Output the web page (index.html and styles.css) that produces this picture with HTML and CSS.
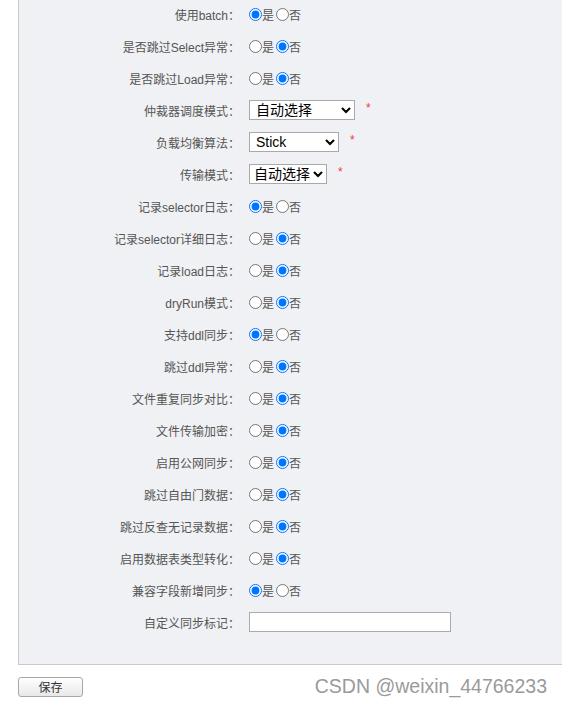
FILE: index.html
```html
<!DOCTYPE html>
<html lang="zh-CN">
<head>
  <meta charset="UTF-8" />
  <title>同步配置</title>
  <link rel="stylesheet" href="styles.css">
</head>
<body>
  <form class="panel">
    <div class="row"><label class="lbl">使用batch：</label><div class="ctl"><input type="radio" name="batch" checked>是<input type="radio" name="batch">否</div></div>
    <div class="row"><label class="lbl">是否跳过Select异常：</label><div class="ctl"><input type="radio" name="skipSel">是<input type="radio" name="skipSel" checked>否</div></div>
    <div class="row"><label class="lbl">是否跳过Load异常：</label><div class="ctl"><input type="radio" name="skipLoad">是<input type="radio" name="skipLoad" checked>否</div></div>
    <div class="row"><label class="lbl">仲裁器调度模式：</label><div class="ctl"><select class="sel-arb"><option>自动选择</option></select><span class="req">*</span></div></div>
    <div class="row"><label class="lbl">负载均衡算法：</label><div class="ctl"><select class="sel-lb"><option>Stick</option></select><span class="req">*</span></div></div>
    <div class="row"><label class="lbl">传输模式：</label><div class="ctl"><select class="sel-auto"><option>自动选择</option></select><span class="req">*</span></div></div>
    <div class="row"><label class="lbl">记录selector日志：</label><div class="ctl"><input type="radio" name="selLog" checked>是<input type="radio" name="selLog">否</div></div>
    <div class="row"><label class="lbl">记录selector详细日志：</label><div class="ctl"><input type="radio" name="selDetail">是<input type="radio" name="selDetail" checked>否</div></div>
    <div class="row"><label class="lbl">记录load日志：</label><div class="ctl"><input type="radio" name="loadLog">是<input type="radio" name="loadLog" checked>否</div></div>
    <div class="row"><label class="lbl">dryRun模式：</label><div class="ctl"><input type="radio" name="dryRun">是<input type="radio" name="dryRun" checked>否</div></div>
    <div class="row"><label class="lbl">支持ddl同步：</label><div class="ctl"><input type="radio" name="ddlSync" checked>是<input type="radio" name="ddlSync">否</div></div>
    <div class="row"><label class="lbl">跳过ddl异常：</label><div class="ctl"><input type="radio" name="ddlSkip">是<input type="radio" name="ddlSkip" checked>否</div></div>
    <div class="row"><label class="lbl">文件重复同步对比：</label><div class="ctl"><input type="radio" name="fileDup">是<input type="radio" name="fileDup" checked>否</div></div>
    <div class="row"><label class="lbl">文件传输加密：</label><div class="ctl"><input type="radio" name="fileEnc">是<input type="radio" name="fileEnc" checked>否</div></div>
    <div class="row"><label class="lbl">启用公网同步：</label><div class="ctl"><input type="radio" name="pubNet">是<input type="radio" name="pubNet" checked>否</div></div>
    <div class="row"><label class="lbl">跳过自由门数据：</label><div class="ctl"><input type="radio" name="freeDoor">是<input type="radio" name="freeDoor" checked>否</div></div>
    <div class="row"><label class="lbl">跳过反查无记录数据：</label><div class="ctl"><input type="radio" name="noRecord">是<input type="radio" name="noRecord" checked>否</div></div>
    <div class="row"><label class="lbl">启用数据表类型转化：</label><div class="ctl"><input type="radio" name="typeConv">是<input type="radio" name="typeConv" checked>否</div></div>
    <div class="row"><label class="lbl">兼容字段新增同步：</label><div class="ctl"><input type="radio" name="compat" checked>是<input type="radio" name="compat">否</div></div>
    <div class="row"><label class="lbl">自定义同步标记：</label><div class="ctl"><input type="text" class="txt"></div></div>
  </form>

  <div class="footer">
    <button type="button" class="btn-save">保存</button>
    <span class="watermark">CSDN @weixin_44766233</span>
  </div>
</body>
</html>
```

FILE: styles.css
```css
body {
  margin: 0;
  background-color: #fff;
  font-family: "Liberation Sans", Arial, "Noto Sans CJK SC", sans-serif;
  font-size: 12px;
  color: #555;
  overflow: hidden;
}

.panel {
  margin: -2px 0 0 18px;
  padding-bottom: 26px;
  background-color: #f0f1f4;
  border-left: 1px solid #c9c9c9;
  border-bottom: 1px solid #c9c9c9;
}

.row {
  display: flex;
  align-items: center;
  height: 32px;
}

.lbl {
  width: 221px;
  text-align: right;
  white-space: nowrap;
}

.ctl {
  display: flex;
  align-items: center;
  margin-left: 9px;
  color: #555;
}

.ctl input[type="radio"] {
  width: 13px;
  height: 13px;
  margin: 0 0 0 2px;
}

.ctl input[type="radio"]:first-child {
  margin-left: 0;
}

select {
  height: 20px;
  font-family: "Liberation Sans", Arial, "Noto Sans CJK SC", sans-serif;
  font-size: 14px;
  color: #000;
  background-color: #fff;
  border: 1px solid #a9a9a9;
  border-radius: 0;
  padding: 0 0 0 2px;
}

.sel-arb {
  width: 106px;
}

.sel-lb {
  width: 90px;
}

.sel-auto {
  width: 78px;
  padding-left: 0;
}

.req {
  color: #f33;
  font-size: 12px;
  margin-left: 11px;
  margin-top: -4px;
}

.txt {
  width: 202px;
  height: 20px;
  box-sizing: border-box;
  margin: 0;
  border: 1px solid #aaa;
  background-color: #fff;
}

.footer {
  display: flex;
  align-items: center;
  justify-content: space-between;
  margin: 10px 15px 0 18px;
}

.btn-save {
  width: 65px;
  height: 20px;
  padding: 0;
  font-family: "Noto Sans CJK SC", sans-serif;
  font-size: 12px;
  color: #333;
  border: 1px solid #a8a8a8;
  border-radius: 3px;
  background: linear-gradient(#ffffff, #e8e8e8);
}

.watermark {
  font-family: "Liberation Sans", Arial, sans-serif;
  font-size: 19.5px;
  color: #9a9a9a;
}
```
